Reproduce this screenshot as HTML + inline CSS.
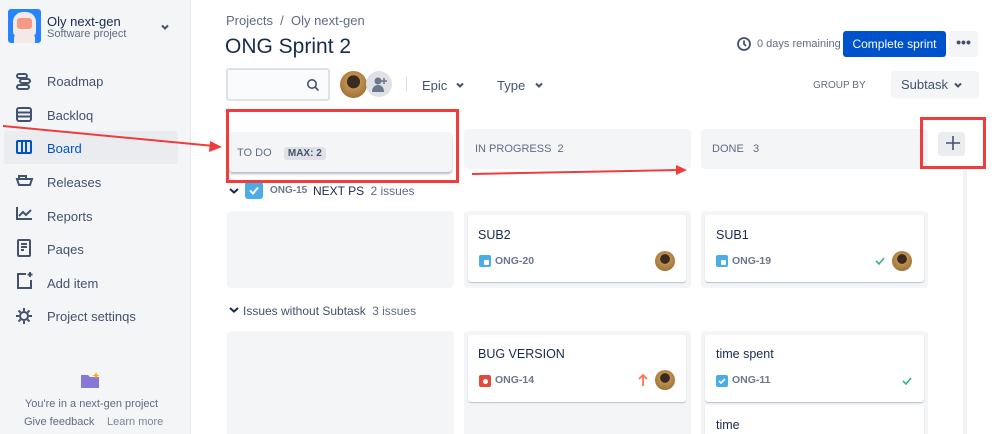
<!DOCTYPE html>
<html><head><meta charset="utf-8"><style>
*{box-sizing:border-box;margin:0;padding:0}
html,body{width:999px;height:434px;overflow:hidden}
body{background:#fff;font-family:"Liberation Sans",sans-serif;color:#172b4d;position:relative}
.a{position:absolute}
.sb{left:0;top:0;width:191px;height:434px;background:#f4f5f7;border-right:1px solid #e6e8ec}
.nav{left:47px;font-size:13px;color:#42526e;line-height:16px}
.g{color:#5e6c84}
.cell{background:#f4f5f7;border-radius:4px}
.card{background:#fff;border-radius:3px;box-shadow:0 1px 1px rgba(9,30,66,.25)}
.ct{font-size:12.5px;color:#172b4d}
.key{font-size:10.5px;font-weight:bold;color:#6b778c}
.av{border-radius:50%;background:radial-gradient(circle at 50% 40%,#3b2a20 0 30%,#c0914e 32%,#8a6230 100%)}
.colh{background:#f4f5f7;border-radius:4px;font-size:11px;color:#5e6c84}
</style></head><body>
<div class="a sb"></div>
<div class="a" style="left:8px;top:9px;width:33px;height:34px;background:#2684ff;border-radius:3px;overflow:hidden">
 <div class="a" style="left:5px;top:3px;width:23px;height:24px;background:#f3e9e6;border-radius:10px 10px 4px 4px"></div>
 <div class="a" style="left:9px;top:9px;width:15px;height:11px;background:#f49a86;border-radius:3px"></div>
 <div class="a" style="left:6px;top:24px;width:21px;height:10px;background:#f3e9e6;border-radius:5px 5px 0 0"></div>
</div>
<div class="a" style="left:47px;top:14px;font-size:13px;color:#172b4d">Oly next-gen</div>
<div class="a g" style="left:47px;top:28px;font-size:11px">Software project</div>
<svg class="a" style="left:159px;top:21px" width="12" height="12"><path d="M3 4.5l3 3 3-3" stroke="#42526e" stroke-width="2" fill="none"/></svg>

<div class="a" style="left:4px;top:131px;width:174px;height:33px;background:#ebecf0;border-radius:3px"></div>
<svg class="a" style="left:14px;top:72px" width="20" height="260" fill="none" stroke="#42526e" stroke-width="2">
 <rect x="3" y="2" width="10" height="4" rx="2"/><rect x="6" y="7" width="10" height="4" rx="2"/><rect x="3" y="13" width="12" height="4" rx="2"/>
 <rect x="3" y="36" width="14" height="13" rx="2"/><path d="M3 40.5h14M3 44.5h14"/>
 <rect x="3" y="69" width="14" height="12" rx="1" stroke="#0052cc"/><path d="M8 69v12M12 69v12" stroke="#0052cc"/>
 <path d="M3 107h15l-2 6H5zM5 107v-3h7v3"/>
 <path d="M3 135v12h15M5 144l4-4 3 3 5-5"/>
 <rect x="4" y="168" width="12" height="16" rx="1"/><path d="M7 172h6M7 175h6M7 178h3"/>
 <path d="M12 202H4v14h13v-8M16 200v5M13.5 202.5h5"/>
 <circle cx="10" cy="244" r="4"/><path d="M10 236v3M10 249v3M2 244h3M15 244h3M4.5 238.5l2 2M13.5 247.5l2 2M4.5 249.5l2-2M13.5 240.5l2-2"/>
</svg>
<div class="a nav" style="top:74px">Roadmap</div>
<div class="a nav" style="top:108px">Backloq</div>
<div class="a nav" style="top:141px;color:#0052cc">Board</div>
<div class="a nav" style="top:175px">Releases</div>
<div class="a nav" style="top:209px">Reports</div>
<div class="a nav" style="top:242px">Paqes</div>
<div class="a nav" style="top:276px">Add item</div>
<div class="a nav" style="top:309px">Project settinqs</div>
<svg class="a" style="left:80px;top:371px" width="22" height="18"><path d="M1 4h7l2 2h9v11H1z" fill="#8777d9"/><path d="M16 1l1 2.5 2.5 1-2.5 1-1 2.5-1-2.5-2.5-1 2.5-1z" fill="#ffab00"/></svg>
<div class="a g" style="left:0;width:183px;text-align:center;top:398px;font-size:11px">You're in a next-gen project</div>
<div class="a g" style="left:24px;top:416px;font-size:11px">Give feedback</div>
<div class="a" style="left:107px;top:416px;font-size:11px;color:#7a869a">Learn more</div>

<div class="a g" style="left:226px;top:13px;font-size:13px">Projects&nbsp;&nbsp;/&nbsp;&nbsp;Oly next-gen</div>
<div class="a" style="left:225px;top:35px;font-size:21px">ONG Sprint 2</div>
<div class="a" style="left:226px;top:68px;width:104px;height:33px;border:2px solid #dfe1e6;border-radius:3px;background:#fafbfc"></div>
<svg class="a" style="left:306px;top:78px" width="14" height="14" fill="none" stroke="#42526e" stroke-width="1.6"><circle cx="6" cy="6" r="4.2"/><path d="M9 9l3.5 3.5"/></svg>
<div class="a av" style="left:340px;top:71px;width:27px;height:27px"></div>
<div class="a" style="left:366px;top:71px;width:26px;height:26px;border-radius:50%;background:#dfe1e6"></div>
<svg class="a" style="left:370px;top:75px" width="20" height="18" fill="#6b778c"><circle cx="8" cy="6" r="3.5"/><path d="M2 17c0-5 3-7 6-7s6 2 6 7z"/><path d="M14 3v6M11 6h6" stroke="#6b778c" stroke-width="1.6"/></svg>
<div class="a" style="left:406px;top:76px;width:1px;height:16px;background:#dfe1e6"></div>
<div class="a" style="left:422px;top:78px;font-size:13px;color:#42526e">Epic</div>
<svg class="a" style="left:454px;top:79px" width="12" height="12"><path d="M3 4.5l3 3 3-3" stroke="#42526e" stroke-width="2" fill="none"/></svg>
<div class="a" style="left:497px;top:78px;font-size:13px;color:#42526e">Type</div>
<svg class="a" style="left:533px;top:79px" width="12" height="12"><path d="M3 4.5l3 3 3-3" stroke="#42526e" stroke-width="2" fill="none"/></svg>

<svg class="a" style="left:736px;top:36px" width="16" height="16" fill="none" stroke="#42526e" stroke-width="1.8"><circle cx="8" cy="8" r="6"/><path d="M8 4.5V8l2 2"/></svg>
<div class="a g" style="left:757px;top:38px;font-size:11px">0 days remaining</div>
<div class="a" style="left:843px;top:31px;width:103px;height:26px;background:#0052cc;border-radius:3px;color:#fff;font-size:12px;text-align:center;line-height:26px">Complete sprint</div>
<div class="a" style="left:949px;top:31px;width:29px;height:26px;background:#f4f5f7;border-radius:3px;text-align:center;font-weight:bold;font-size:14px;line-height:22px;color:#42526e">•••</div>
<div class="a g" style="left:813px;top:80px;font-size:10px">GROUP BY</div>
<div class="a" style="left:891px;top:71px;width:88px;height:27px;background:#f4f5f7;border-radius:3px;font-size:13px;color:#42526e;line-height:27px;padding-left:10px">Subtask</div>
<svg class="a" style="left:952px;top:79px" width="12" height="12"><path d="M3 4.5l3 3 3-3" stroke="#42526e" stroke-width="2" fill="none"/></svg>

<div class="a colh" style="left:229px;top:132px;width:223px;height:40px;box-shadow:0 2px 2px rgba(9,30,66,.3);padding:15px 0 0 8px">TO DO&nbsp;&nbsp;&nbsp;&nbsp;<span style="background:#dfe1e6;border-radius:3px;padding:1px 4px;font-weight:bold;color:#42526e;font-size:10px">MAX: 2</span></div>
<div class="a colh" style="left:464px;top:129px;width:227px;height:40px;padding:14px 0 0 11px">IN PROGRESS&nbsp;&nbsp;2</div>
<div class="a colh" style="left:701px;top:129px;width:227px;height:40px;padding:14px 0 0 11px">DONE&nbsp;&nbsp;&nbsp;3</div>
<div class="a" style="left:938px;top:132px;width:27px;height:24px;background:#ebecf0;border-radius:3px"></div>
<svg class="a" style="left:943px;top:133px" width="20" height="20"><path d="M10 3v14M3 10h14" stroke="#42526e" stroke-width="1.6"/></svg>
<div class="a" style="left:963px;top:170px;width:4px;height:264px;background:#f1f2f4"></div>

<svg class="a" style="left:228px;top:186px" width="12" height="10"><path d="M2 3l4 3.5L10 3" stroke="#172b4d" stroke-width="2" fill="none"/></svg>
<div class="a" style="left:245px;top:181px;width:18px;height:18px;background:#4bade8;border-radius:3px"></div>
<svg class="a" style="left:245px;top:181px" width="18" height="18"><path d="M5 9.5l3 3 5-6" stroke="#fff" stroke-width="2" fill="none"/></svg>
<div class="a key" style="left:270px;top:185px;font-size:10px">ONG-15</div>
<div class="a" style="left:313px;top:184px;font-size:12px;white-space:nowrap">NEXT PS <span class="g" style="margin-left:3px">2 issues</span></div>

<div class="a cell" style="left:227px;top:211px;width:227px;height:77px"></div>
<div class="a cell" style="left:464px;top:211px;width:227px;height:77px"></div>
<div class="a cell" style="left:701px;top:211px;width:227px;height:77px"></div>
<div class="a card" style="left:468px;top:215px;width:218px;height:67px"></div>
<div class="a ct" style="left:478px;top:228px">SUB2</div>
<div class="a" style="left:479px;top:255px;width:12px;height:12px;background:#4bade8;border-radius:2px"></div>
<div class="a" style="left:484px;top:260px;width:5px;height:5px;background:#fff;border-radius:1px"></div>
<div class="a key" style="left:495px;top:255px">ONG-20</div>
<div class="a av" style="left:655px;top:251px;width:20px;height:20px"></div>
<div class="a card" style="left:705px;top:215px;width:219px;height:67px"></div>
<div class="a ct" style="left:716px;top:228px">SUB1</div>
<div class="a" style="left:716px;top:255px;width:12px;height:12px;background:#4bade8;border-radius:2px"></div>
<div class="a" style="left:721px;top:260px;width:5px;height:5px;background:#fff;border-radius:1px"></div>
<div class="a key" style="left:732px;top:255px">ONG-19</div>
<svg class="a" style="left:874px;top:256px" width="12" height="10"><path d="M2 5l3 3 5-6" stroke="#36b37e" stroke-width="1.6" fill="none"/></svg>
<div class="a av" style="left:892px;top:251px;width:20px;height:20px"></div>

<svg class="a" style="left:228px;top:305px" width="12" height="10"><path d="M2 3l4 3.5L10 3" stroke="#172b4d" stroke-width="2" fill="none"/></svg>
<div class="a" style="left:243px;top:304px;font-size:12px;color:#42526e;white-space:nowrap">Issues without Subtask <span class="g" style="margin-left:3px">3 issues</span></div>

<div class="a cell" style="left:227px;top:331px;width:227px;height:103px;border-radius:4px 4px 0 0"></div>
<div class="a cell" style="left:464px;top:331px;width:227px;height:103px;border-radius:4px 4px 0 0"></div>
<div class="a cell" style="left:701px;top:331px;width:227px;height:103px;border-radius:4px 4px 0 0"></div>
<div class="a card" style="left:468px;top:335px;width:218px;height:67px"></div>
<div class="a ct" style="left:478px;top:347px">BUG VERSION</div>
<div class="a" style="left:479px;top:375px;width:12px;height:12px;background:#e5493a;border-radius:2px"></div>
<div class="a" style="left:482.5px;top:378.5px;width:5px;height:5px;background:#fff;border-radius:50%"></div>
<div class="a key" style="left:495px;top:374px">ONG-14</div>
<svg class="a" style="left:637px;top:373px" width="12" height="14"><path d="M6 13V2M2 6l4-4 4 4" stroke="#ff7452" stroke-width="1.8" fill="none"/></svg>
<div class="a av" style="left:655px;top:370px;width:20px;height:20px"></div>
<div class="a card" style="left:705px;top:335px;width:219px;height:67px"></div>
<div class="a ct" style="left:716px;top:347px">time spent</div>
<div class="a" style="left:716px;top:375px;width:12px;height:12px;background:#4bade8;border-radius:2px"></div>
<svg class="a" style="left:716px;top:375px" width="12" height="12"><path d="M3 6l2 2 4-4" stroke="#fff" stroke-width="1.6" fill="none"/></svg>
<div class="a key" style="left:732px;top:374px">ONG-11</div>
<svg class="a" style="left:901px;top:376px" width="12" height="10"><path d="M2 5l3 3 5-6" stroke="#36b37e" stroke-width="1.6" fill="none"/></svg>
<div class="a card" style="left:705px;top:405px;width:219px;height:29px;border-radius:3px 3px 0 0"></div>
<div class="a ct" style="left:716px;top:418px">time</div>

<div class="a" style="left:226px;top:109px;width:233px;height:74px;border:3px solid #f03c3c"></div>
<div class="a" style="left:920px;top:117px;width:66px;height:52px;border:3px solid #f03c3c"></div>
<svg class="a" style="left:0;top:0" width="999" height="434"><g stroke="#f03c3c" stroke-width="2" fill="#f03c3c">
<path d="M3 126L214 146"/><path d="M222 147l-12-6 -1 11z" stroke="none"/>
<path d="M472 174L678 170"/><path d="M687 170l-11-5v10z" stroke="none"/></g></svg>
</body></html>
